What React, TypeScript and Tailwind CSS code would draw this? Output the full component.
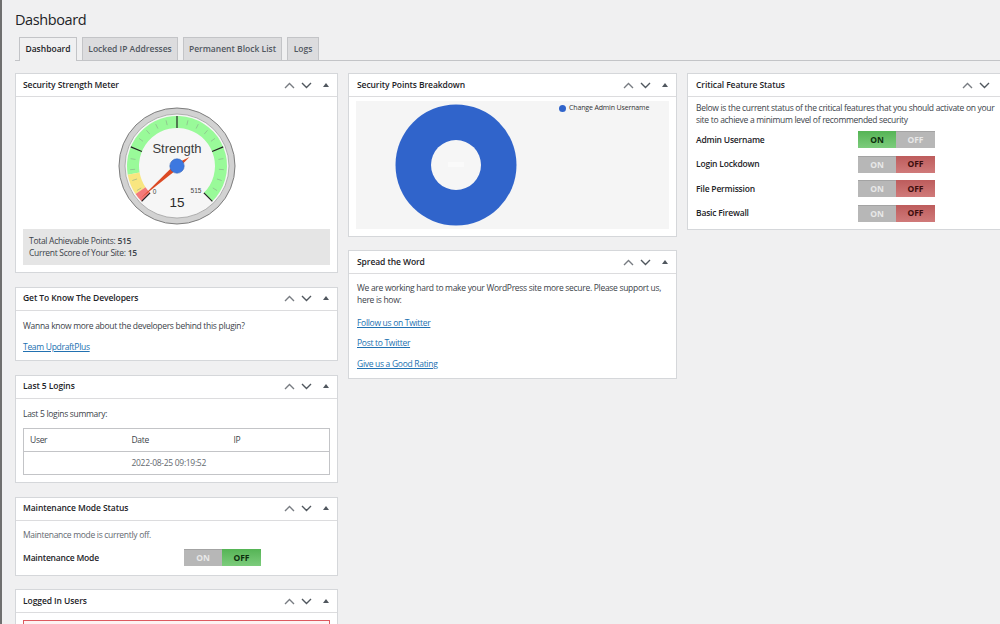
import React from "react";

function Controls({ noCollapse }: { noCollapse?: boolean }) {
  return (
    <div className="flex items-center gap-[6px] text-[#50575e]">
      <svg width="11" height="7" viewBox="0 0 11 7" fill="none" stroke="#787c82" strokeWidth="1.4"><path d="M1 6 L5.5 1.5 L10 6" /></svg>
      <svg width="11" height="7" viewBox="0 0 11 7" fill="none" stroke="#50575e" strokeWidth="1.4"><path d="M1 1 L5.5 5.5 L10 1" /></svg>
      {!noCollapse && (
        <svg className="ml-[5px]" width="6" height="4" viewBox="0 0 6 4" fill="#50575e"><path d="M3 0 L6 4 L0 4 Z" /></svg>
      )}
    </div>
  );
}

function Panel({ title, className, children, noCollapse, wide, compact }: { title: string; className?: string; children: React.ReactNode; noCollapse?: boolean; wide?: boolean; compact?: boolean }) {
  return (
    <section className={"bg-white border border-[#d5d7da] shrink-0 " + (className ?? "")}>
      <header className={"h-[23px] flex items-center justify-between border-b border-[#dcdcde] " + (wide ? "pl-[8px] " : "pl-[7px] ") + (noCollapse ? "pr-[26px] " : "pr-[8px] ") + (compact ? "pb-[2px]" : "")}>
        <h2 className="text-[8.5px] font-semibold tracking-[-0.08px] text-[#1d2327]">{title}</h2>
        <Controls noCollapse={noCollapse} />
      </header>
      {children}
    </section>
  );
}

type Mode = "on" | "off" | "offGreen";

function Toggle({ mode }: { mode: Mode }) {
  const gray = "bg-[#b7b7b7] text-[#e8e8e8] border-t border-[#a3a3a3]";
  const green = "bg-gradient-to-b from-[#55b455] to-[#7ccc7c] text-[#0d2e0d]";
  const red = "bg-gradient-to-b from-[#bd5c5c] to-[#d07a7a] text-[#3b0d0d]";
  return (
    <div className="flex w-[77px] h-[17px] text-[8.5px] font-bold tracking-normal shrink-0">
      <div className={"w-[38px] flex items-center justify-center " + (mode === "on" ? green : gray)}>ON</div>
      <div className={"flex-1 flex items-center justify-center " + (mode === "on" ? gray : mode === "off" ? red : green)}>OFF</div>
    </div>
  );
}

function polar(r: number, deg: number): [number, number] {
  const a = ((deg - 90) * Math.PI) / 180;
  return [60 + r * Math.cos(a), 60 + r * Math.sin(a)];
}
function band(r1: number, r2: number, a1: number, a2: number) {
  const [x1, y1] = polar(r2, a1);
  const [x2, y2] = polar(r2, a2);
  const [x3, y3] = polar(r1, a2);
  const [x4, y4] = polar(r1, a1);
  const large = a2 - a1 > 180 ? 1 : 0;
  return `M${x1} ${y1} A${r2} ${r2} 0 ${large} 1 ${x2} ${y2} L${x3} ${y3} A${r1} ${r1} 0 ${large} 0 ${x4} ${y4} Z`;
}

function Gauge() {
  const ticks: React.ReactNode[] = [];
  for (let i = 0; i <= 20; i++) {
    const deg = -135 + i * 13.5;
    const major = i % 5 === 0;
    const [x1, y1] = polar(major ? 38 : 42, deg);
    const [x2, y2] = polar(major ? 50 : 47, deg);
    ticks.push(<line key={i} x1={x1} y1={y1} x2={x2} y2={y2} stroke={major ? "#222" : "#8aa88a"} strokeWidth={major ? 1.2 : 0.6} />);
  }
  return (
    <svg width="120" height="120" viewBox="0 0 120 120" className="block">
      <circle cx="60" cy="60" r="58" fill="#d2d2d2" stroke="#7d7d7d" strokeWidth="1" />
      <circle cx="60" cy="60" r="52" fill="#f6f6f6" stroke="#a0a0a0" strokeWidth="0.8" />
      <path d={band(38, 50, -100, 135)} fill="#99fa99" />
      <path d={band(38, 50, -124, -100)} fill="#f8e680" />
      <path d={band(38, 50, -135, -124)} fill="#f47a7a" />
      {ticks}
      <text x="60" y="47" textAnchor="middle" fontSize="13" fill="#3c3c3c" fontFamily="Liberation Sans, sans-serif">Strength</text>
      <text x="37.5" y="87.5" textAnchor="middle" fontSize="6.5" fill="#444" fontFamily="Liberation Sans, sans-serif">0</text>
      <text x="79" y="87" textAnchor="middle" fontSize="6.5" fill="#444" fontFamily="Liberation Sans, sans-serif">515</text>
      <text x="60" y="100.5" textAnchor="middle" fontSize="13.5" fill="#2a2a2a" fontFamily="Liberation Sans, sans-serif">15</text>
      <path d="M72.5 51 L61.7 61.9 L24 92 L58.3 58.1 Z" fill="#dc4a24" />
      <circle cx="60" cy="60" r="7.2" fill="#3d78e0" stroke="#3566b8" strokeWidth="0.6" />
    </svg>
  );
}

function Donut() {
  return (
    <svg width="122" height="122" viewBox="0 0 122 122" className="block shrink-0">
      <circle cx="61" cy="61" r="60.5" fill="#3064cb" />
      <circle cx="61" cy="61" r="25" fill="#f6f6f6" />
      <rect x="53" y="58" width="16" height="5" fill="#fafafa" />
    </svg>
  );
}

const body = "text-[8.5px] leading-[12px] tracking-[-0.3px]";
const link = "text-[#2271b1] underline block";
const label = "font-semibold text-[#1d2327] tracking-[-0.2px]";

export default function App() {
  return (
    <div className="relative h-[624px] w-[1000px] overflow-hidden bg-[#f0f0f1] font-['Open_Sans','Noto_Sans',sans-serif] text-[#3c434a] border-l-2 border-[#6f6f6f]">
      <div className="absolute left-[-2px] top-[333px] w-[2px] h-[24px] bg-[#6f9fc8]" />
      <div className="pl-[13px]">
        <h1 className="pt-[10px] h-[37px] text-[14.5px] leading-[20px] tracking-[-0.4px] text-[#1d2327]">Dashboard</h1>
        <nav className="flex items-end h-[24px] border-b border-[#c3c4c7] pl-[4px] gap-[5px] text-[8.5px] font-semibold">
          <div className="w-[58px] h-[24px] -mb-px flex items-center justify-center border border-b-0 border-[#c3c4c7] bg-[#f0f0f1] text-[#1d2327]">Dashboard</div>
          <div className="w-[96px] h-[23px] flex items-center justify-center border border-b-0 border-[#c3c4c7] bg-[#dcdcde] text-[#50575e]">Locked IP Addresses</div>
          <div className="w-[99px] h-[23px] flex items-center justify-center border border-b-0 border-[#c3c4c7] bg-[#dcdcde] text-[#50575e]">Permanent Block List</div>
          <div className="w-[32px] h-[23px] flex items-center justify-center border border-b-0 border-[#c3c4c7] bg-[#dcdcde] text-[#50575e]">Logs</div>
        </nav>
        <div className="flex gap-[10px] mt-[12px] items-start">
          <div className="w-[323px] flex flex-col gap-[14px] shrink-0">
            <Panel title="Security Strength Meter" className="h-[200px]">
              <div className="flex justify-center pt-[9px] h-[132px]"><Gauge /></div>
              <div className={"mx-[7px] h-[36px] bg-[#e5e5e5] px-[6px] py-[6px] " + body}>
                <p>Total Achievable Points: <b className="font-semibold">515</b></p>
                <p>Current Score of Your Site: <b className="font-semibold">15</b></p>
              </div>
            </Panel>
            <Panel title="Get To Know The Developers" className="h-[74px]" compact>
              <div className={"px-[7px] pt-[9px] " + body}>
                <p>Wanna know more about the developers behind this plugin?</p>
                <a className={link + " mt-[9px]"}>Team UpdraftPlus</a>
              </div>
            </Panel>
            <Panel title="Last 5 Logins" className="h-[108px]" compact>
              <div className={"px-[7px] pt-[9px] " + body}>
                <p>Last 5 logins summary:</p>
                <table className="mt-[8px] w-full border border-[#c3c4c7] table-fixed">
                  <tbody>
                    <tr className="h-[23px] border-b border-[#c3c4c7]">
                      <td className="pl-[6px] w-[108px]">User</td>
                      <td className="w-[102px]">Date</td>
                      <td>IP</td>
                    </tr>
                    <tr className="h-[23px]">
                      <td></td>
                      <td className="text-[#646970]">2022-08-25 09:19:52</td>
                      <td></td>
                    </tr>
                  </tbody>
                </table>
              </div>
            </Panel>
            <Panel title="Maintenance Mode Status" className="h-[79px]" compact>
              <div className={"px-[7px] pt-[8px] " + body}>
                <p className="text-[#646970]">Maintenance mode is currently off.</p>
                <div className="flex items-center mt-[8px]">
                  <span className={"w-[161px] " + label}>Maintenance Mode</span>
                  <Toggle mode="offGreen" />
                </div>
              </div>
            </Panel>
            <Panel title="Logged In Users" className="h-[80px] -mt-px">
              <div className="mx-[7px] mt-[7px] h-[40px] border border-[#dd5a60] bg-[#fdf3f3]" />
            </Panel>
          </div>

          <div className="w-[329px] flex flex-col gap-[14px] shrink-0">
            <Panel title="Security Points Breakdown" className="h-[164px]" wide>
              <div className="mx-[7px] mt-[4px] h-[128px] bg-[#f5f5f5] flex pt-[3px] pl-[39px]">
                <Donut />
                <div className="ml-[42px] flex items-center gap-[3px] h-[8px] text-[7px] tracking-[-0.15px] text-[#333] whitespace-nowrap">
                  <span className="w-[7px] h-[7px] rounded-full bg-[#3064cb]" />
                  <span>Change Admin Username</span>
                </div>
              </div>
            </Panel>
            <Panel title="Spread the Word" className="h-[129px] -mt-px" wide>
              <div className={"pl-[8px] pr-[6px] pt-[8px] " + body}>
                <p>We are working hard to make your WordPress site more secure. Please support us, here is how:</p>
                <a className={link + " mt-[11px]"}>Follow us on Twitter</a>
                <a className={link + " mt-[8px]"}>Post to Twitter</a>
                <a className={link + " mt-[9px]"}>Give us a Good Rating</a>
              </div>
            </Panel>
          </div>

          <div className="w-[330px] shrink-0">
            <Panel title="Critical Feature Status" className="h-[157px]" noCollapse wide>
              <div className={"px-[8px] pt-[5px] " + body}>
                <p className="w-[305px]">Below is the current status of the critical features that you should activate on your site to achieve a minimum level of recommended security</p>
                <div className="mt-[5px] flex flex-col gap-[7.5px]">
                  {([["Admin Username", "on"], ["Login Lockdown", "off"], ["File Permission", "off"], ["Basic Firewall", "off"]] as [string, Mode][]).map(([l, m]) => (
                    <div key={l} className="flex items-center">
                      <span className={"w-[162px] " + label}>{l}</span>
                      <Toggle mode={m} />
                    </div>
                  ))}
                </div>
              </div>
            </Panel>
          </div>
        </div>
      </div>
    </div>
  );
}
